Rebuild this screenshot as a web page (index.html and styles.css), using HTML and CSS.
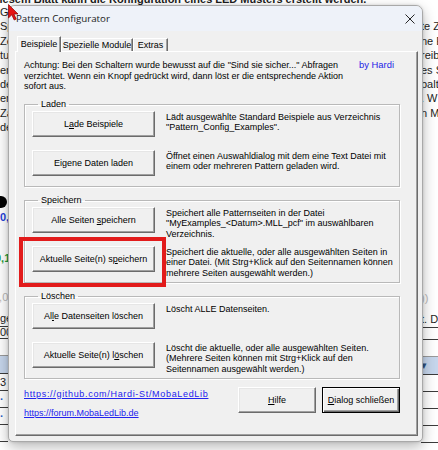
FILE: index.html
```html
<!DOCTYPE html>
<html>
<head>
<meta charset="utf-8">
<title>Pattern Configurator</title>
<link rel="stylesheet" href="styles.css">
</head>
<body>
<div class="desk">
  <div class="sheet">
    <div class="sheet-head">In diesem Blatt kann die Konfiguration eines LED Musters erstellt werden.</div>
    <div class="cols">
      <div class="col col-left">
        <div class="ln">Ge</div>
        <div class="ln">Sp</div>
        <div class="ln">Ze</div>
        <div class="ln">tu</div>
        <div class="ln">er</div>
        <div class="ln">de</div>
        <div class="ln">er</div>
        <div class="ln">Za</div>
        <div class="ln">de</div>
        <div class="dot"></div>
        <div class="ln num blue">0,</div>
        <div class="ln num green">0,1</div>
        <div class="ln num gray">0,0</div>
        <div class="cell tall">ge</div>
        <div class="cell short">00</div>
        <div class="cell blank"></div>
        <div class="cell hdr"></div>
        <div class="cell">3</div>
        <div class="cell mark">·</div>
        <div class="cell mark">·</div>
        <div class="cell"></div>
      </div>
      <div class="col col-right">
        <div class="ln"></div>
        <div class="ln">te Z</div>
        <div class="ln">ne E</div>
        <div class="ln">reib</div>
        <div class="ln">es S</div>
        <div class="ln">palt</div>
        <div class="ln">. W</div>
        <div class="ln">n M</div>
        <div class="ln"></div>
        <div class="ln gray r-gap">))</div>
        <div class="cell tall">t. D</div>
        <div class="cell short"></div>
        <div class="cell blank"></div>
        <div class="cell hdr">▾</div>
        <div class="cell"></div>
        <div class="cell"></div>
        <div class="cell"></div>
        <div class="cell"></div>
      </div>
    </div>
  </div>

  <div class="dialog">
    <div class="titlebar">
      <span class="title">Pattern Configurator</span>
      <svg class="close" width="10" height="10" viewBox="0 0 10 10"><path d="M0.5 0.5L9.5 9.5M9.5 0.5L0.5 9.5" stroke="#262626" stroke-width="1" fill="none"/></svg>
    </div>
    <div class="body">
      <div class="tabs">
        <div class="tab active">Beispiele</div>
        <div class="tab t2">Spezielle Module</div>
        <div class="tab t3">Extras</div>
      </div>
      <div class="panel">
        <div class="warn-row">
          <p class="warn">Achtung: Bei den Schaltern wurde bewusst auf die "Sind sie sicher..." Abfragen<br>verzichtet. Wenn ein Knopf gedrückt wird, dann löst er die entsprechende Aktion<br>sofort aus.</p>
          <span class="author">by Hardi</span>
        </div>

        <fieldset class="group">
          <legend>Laden</legend>
          <div class="grid">
            <button class="btn">L<u>a</u>de Beispiele</button>
            <p class="desc">Lädt ausgewählte Standard Beispiele aus Verzeichnis<br>"Pattern_Config_Examples".</p>
            <button class="btn">Eigene Daten laden</button>
            <p class="desc">Öffnet einen Auswahldialog mit dem eine Text Datei mit<br>einem oder mehreren Pattern geladen wird.</p>
          </div>
        </fieldset>

        <fieldset class="group">
          <legend>Speichern</legend>
          <div class="grid">
            <button class="btn">Alle Seiten <u>s</u>peichern</button>
            <p class="desc">Speichert alle Patternseiten in der Datei<br>"MyExamples_&lt;Datum&gt;.MLL_pcf" im auswählbaren<br>Verzeichnis.</p>
            <button class="btn">Aktuelle Seite(n) s<u>p</u>eichern</button>
            <p class="desc">Speichert die aktuelle, oder alle ausgewählten Seiten in<br>einer Datei. (Mit Strg+Klick auf den Seitennamen können<br>mehrere Seiten ausgewählt werden.)</p>
          </div>
        </fieldset>

        <fieldset class="group">
          <legend>Löschen</legend>
          <div class="grid">
            <button class="btn">Al<u>l</u>e Datenseiten löschen</button>
            <p class="desc">Löscht ALLE Datenseiten.</p>
            <button class="btn">Aktuelle Seite(n) l<u>ö</u>schen</button>
            <p class="desc">Löscht die aktuelle, oder alle ausgewählten Seiten.<br>(Mehrere Seiten können mit Strg+Klick auf den<br>Seitennamen ausgewählt werden.)</p>
          </div>
        </fieldset>

        <div class="footer">
          <div class="links">
            <a class="link wide" href="#">https://github.com/Hardi-St/MobaLedLib</a>
            <a class="link" href="#">https://forum.MobaLedLib.de</a>
          </div>
          <div class="actions">
            <button class="btn small"><u>H</u>ilfe</button>
            <button class="btn small default"><u>D</u>ialog schließen</button>
          </div>
        </div>
      </div>
    </div>
  </div>

  <div class="highlight"></div>
  <svg class="cursor" width="11" height="17" viewBox="0 0 11 17"><path d="M0.5 0.5L0.5 14L3.8 10.8L6.2 16L8.2 15.1L5.9 10L10 10Z" fill="#e41414" stroke="#8a0000" stroke-width="0.7"/></svg>
</div>
</body>
</html>
```

FILE: styles.css
```css
* { box-sizing: border-box; }

body {
  margin: 0;
}

.desk {
  position: relative;
  width: 438px;
  height: 450px;
  overflow: hidden;
  background: #ffffff;
  font-family: "Liberation Sans", Arial, sans-serif;
}

/* ---------- spreadsheet behind the dialog ---------- */
.sheet {
  position: absolute;
  inset: 0;
  display: flex;
  flex-direction: column;
  font-size: 11px;
  color: #1d1d1d;
}

.sheet-head {
  height: 5px;
  overflow: hidden;
  display: flex;
  align-items: flex-end;
  white-space: nowrap;
  font-weight: bold;
  font-size: 11px;
  line-height: 11px;
  text-indent: -20px;
}

.cols {
  flex: 1;
  display: flex;
  justify-content: space-between;
}

.col {
  display: flex;
  flex-direction: column;
  overflow: hidden;
  white-space: nowrap;
}

.col-left { width: 8px; }
.col-right { width: 17px; }

.ln {
  height: 14.4px;
  line-height: 14.4px;
  flex: none;
}

.dot {
  flex: none;
  width: 12px;
  height: 12px;
  border-radius: 50%;
  background: #000;
  margin: 61px 0 0 -5px;
}

.num { font-weight: bold; }
.blue { color: #1f3fd8; margin-top: 2px; }
.green { color: #1e9a3c; margin-top: 26.6px; text-indent: -5px; }
.col-left .gray { margin-top: 25.6px; text-indent: -7px; }
.gray { color: #b8b8b8; font-weight: normal; }
.r-gap { margin-top: 156.4px; }

.cell {
  flex: none;
  height: 17px;
  line-height: 16px;
  border-bottom: 1px solid #3c3c3c;
}

.cell.tall { margin-top: 5.6px; }
.cell.short { height: 12px; line-height: 11px; }
.cell.blank { border-bottom-color: #9a9a9a; }
.cell.hdr { height: 18px; background: #c6d6ec; color: #31507a; }
.cell.mark { color: #2a62c8; font-weight: bold; }

/* ---------- dialog window ---------- */
.dialog {
  position: absolute;
  left: 8px;
  top: 5px;
  width: 415px;
  height: 437px;
  border: 1px solid #a9a9a9;
  border-radius: 7px 7px 5px 5px;
  background: #f0f0f0;
  box-shadow: 0 5px 14px rgba(0, 0, 0, 0.28), 0 0 3px rgba(0, 0, 0, 0.15);
  overflow: hidden;
  display: flex;
  flex-direction: column;
  color: #000;
}

.titlebar {
  flex: none;
  height: 25px;
  background: #eef2f9;
  display: flex;
  align-items: center;
  justify-content: space-between;
  padding: 0 7px 0 7px;
}

.title {
  font-family: "Open Sans", "Noto Sans", sans-serif;
  font-size: 9.75px;
  color: #1a1a1a;
}

.close { display: block; }

.body {
  flex: 1;
  display: flex;
  flex-direction: column;
  padding: 5px 4px 5px 6px;
  font-size: 9px;
}

/* ---------- tabs ---------- */
.tabs {
  flex: none;
  display: flex;
  align-items: flex-end;
  height: 15px;
  padding-left: 2px;
  position: relative;
  z-index: 1;
}

.tab {
  height: 13px;
  line-height: 12px;
  text-align: center;
  background: #f0f0f0;
  border-top: 1px solid #ffffff;
  border-left: 1px solid #ffffff;
  border-right: 1px solid #6b6b6b;
  box-shadow: inset -1px 0 #a0a0a0;
  white-space: nowrap;
}

.tab.active {
  width: 44px;
  height: 16px;
  margin-bottom: -1px;
  line-height: 14px;
}

.tab.t2 { width: 72px; }
.tab.t3 { width: 35px; }

.panel {
  flex: 1;
  border: 1px solid;
  border-color: #ffffff #6b6b6b #6b6b6b #ffffff;
  box-shadow: inset -1px -1px #a0a0a0;
  padding: 8px 17px 0 8px;
  display: flex;
  flex-direction: column;
}

.warn-row {
  display: flex;
  justify-content: space-between;
  padding-right: 6px;
}

.warn {
  margin: 0;
  font-size: 9px;
  line-height: 10.7px;
  white-space: nowrap;
}

.author {
  color: #2323e6;
  font-size: 9.4px;
  line-height: 10.7px;
  white-space: nowrap;
}

/* ---------- group boxes ---------- */
.group {
  margin: 7px 0 0 0;
  padding: 1px 0 10px 7px;
  border: 1px solid #b9b9b9;
  box-shadow: 1px 1px 0 #ffffff, inset 1px 1px 0 #ffffff;
  min-width: 0;
}

.group + .group { margin-top: 8px; }

.group legend {
  padding: 0 3px;
  margin-left: 6px;
  line-height: 11px;
  font-size: 9px;
}

.grid {
  display: grid;
  grid-template-columns: 123px 1fr;
  grid-template-rows: 26px 26px;
  row-gap: 13px;
  column-gap: 11px;
}

.desc {
  margin: 0;
  font-size: 9px;
  line-height: 10.8px;
  white-space: nowrap;
  padding-top: 0.5px;
}

/* ---------- buttons ---------- */
.btn {
  font-family: inherit;
  font-size: 9px;
  color: #000;
  background: #f0f0f0;
  border: 1px solid;
  border-color: #ffffff #6b6b6b #6b6b6b #ffffff;
  box-shadow: inset -1px -1px #a0a0a0, inset 1px 1px #e6e6e6;
  padding: 0;
  margin: 0;
  height: 26px;
  width: 123px;
  white-space: nowrap;
}

.btn.small { width: 78px; }

.btn.default {
  border: 1px solid #000;
  box-shadow: inset 1px 1px #ffffff, inset -1px -1px #6b6b6b, inset -2px -2px #a0a0a0;
}

/* ---------- footer ---------- */
.footer {
  margin-top: 8px;
  display: flex;
  justify-content: space-between;
  align-items: flex-start;
}

.links {
  display: flex;
  flex-direction: column;
  gap: 8px;
  padding-top: 1.5px;
}

.link {
  color: #2222ee;
  text-decoration: underline;
  font-size: 9px;
  line-height: 11px;
  white-space: nowrap;
}

.link.wide { letter-spacing: 0.68px; }

.actions {
  display: flex;
  gap: 6px;
}

/* ---------- overlays ---------- */
.highlight {
  position: absolute;
  left: 19px;
  top: 237px;
  width: 147px;
  height: 50px;
  border: 4px solid #e21b1b;
}

.cursor {
  position: absolute;
  left: 8px;
  top: 4px;
}
```
